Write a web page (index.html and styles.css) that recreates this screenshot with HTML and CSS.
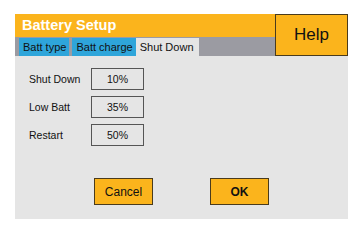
FILE: index.html
```html
<!DOCTYPE html>
<html lang="en">
  <head>
    <meta charset="UTF-8" />
    <title>Battery Setup</title>
    <link rel="stylesheet" href="styles.css">
  </head>
  <body>
    <div class="panel">
      <!-- HEADER -->
      <div class="header">
        <div class="header-left">
          <div class="title">Battery Setup</div>
          <div class="tabs">
            <div class="tab">Batt type</div>
            <div class="tab">Batt charge</div>
            <div class="tab active">Shut Down</div>
          </div>
        </div>
        <button class="help">Help</button>
      </div>

      <!-- FIELDS -->
      <div class="fields">
        <div class="row">
          <span class="label">Shut Down</span>
          <div class="value">10%</div>
        </div>
        <div class="row">
          <span class="label">Low Batt</span>
          <div class="value">35%</div>
        </div>
        <div class="row">
          <span class="label">Restart</span>
          <div class="value">50%</div>
        </div>
      </div>

      <div class="actions">
        <button class="btn">Cancel</button>
        <button class="btn ok">OK</button>
      </div>
    </div>
  </body>
</html>
```
FILE: styles.css
```css
body {
  margin: 0;
  padding: 14px 10px 14px 15px;
  font-family: "Liberation Sans", Arial, sans-serif;
  background: #fff;
}

.panel {
  width: 333px;
  height: 205px;
  background: #e5e5e5;
  display: flex;
  flex-direction: column;
}

.header {
  display: flex;
}

.header-left {
  flex: 1;
  display: flex;
  flex-direction: column;
}

.title {
  height: 23px;
  background: #fbb41c;
  color: #fff;
  font-weight: bold;
  font-size: 14.5px;
  line-height: 23px;
  padding-left: 7px;
}

.tabs {
  height: 19px;
  background: #9b9ba2;
  display: flex;
  gap: 3px;
  padding: 1px 0 0 4px;
  box-sizing: border-box;
}

.tab {
  background: #2ea5da;
  color: #111;
  font-size: 11px;
  line-height: 18px;
  padding: 0 3px 0 4px;
}

.tab.active {
  background: #e5e5e5;
  margin-left: -3px;
  padding: 0 5px 0 4px;
}

.help {
  width: 73px;
  height: 42px;
  box-sizing: border-box;
  background: #fbb41c;
  border: 1.5px solid #4a3b1c;
  font-family: inherit;
  font-size: 17px;
  color: #111;
  padding: 0;
}

.fields {
  padding: 12px 0 0 14px;
  display: flex;
  flex-direction: column;
  gap: 6px;
}

.row {
  display: flex;
  align-items: center;
}

.label {
  width: 62px;
  font-size: 10.5px;
  color: #111;
}

.value {
  width: 53px;
  height: 22px;
  box-sizing: border-box;
  border: 1px solid #555;
  font-size: 10.5px;
  line-height: 20px;
  text-align: center;
  color: #111;
}

.actions {
  display: flex;
  gap: 57px;
  padding: 32px 0 0 79px;
}

.btn {
  width: 59px;
  height: 27px;
  box-sizing: border-box;
  background: #fbb41c;
  border: 1.5px solid #4a3b1c;
  font-family: inherit;
  font-size: 12px;
  color: #111;
  padding: 0;
}

.btn.ok {
  font-weight: bold;
}
```
